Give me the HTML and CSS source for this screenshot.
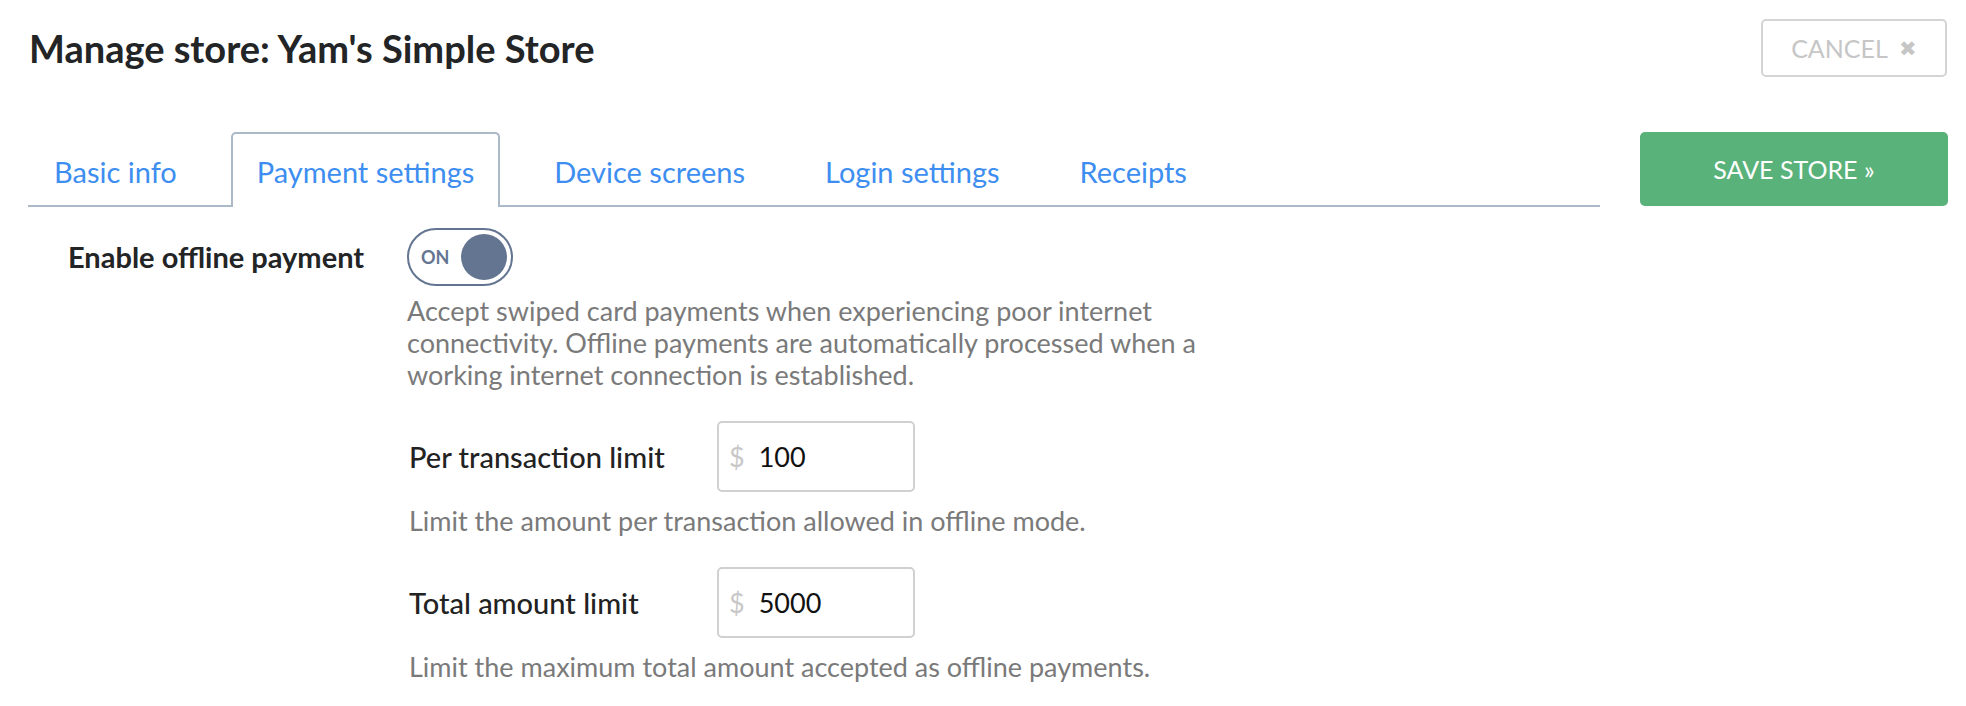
FILE: index.html
```html
<!DOCTYPE html>
<html>
<head>
<meta charset="utf-8">
<link rel="stylesheet" href="styles.css">
</head>
<body>
<header class="header">
  <h1 class="title">Manage store: Yam's Simple Store</h1>
  <button class="btn-cancel">CANCEL <span class="x">&#10006;</span></button>
</header>
<div class="main">
  <div class="content">
    <nav class="tabs">
      <a class="tab">Basic info</a>
      <a class="tab active">Payment settings</a>
      <a class="tab">Device screens</a>
      <a class="tab">Login settings</a>
      <a class="tab">Receipts</a>
    </nav>
    <div class="form">
      <div class="field-label">Enable offline payment</div>
      <div class="field-body">
        <div class="toggle"><span class="toggle-text">ON</span><span class="knob"></span></div>
        <p class="help help-main">Accept swiped card payments when experiencing poor internet connectivity. Offline payments are automatically processed when a working internet connection is established.</p>
        <div class="sub">
          <div class="sub-row">
            <label class="sub-label">Per transaction limit</label>
            <div class="money"><span class="cur">$</span><span class="val">100</span></div>
          </div>
          <p class="help">Limit the amount per transaction allowed in offline mode.</p>
          <div class="sub-row">
            <label class="sub-label">Total amount limit</label>
            <div class="money"><span class="cur">$</span><span class="val">5000</span></div>
          </div>
          <p class="help">Limit the maximum total amount accepted as offline payments.</p>
        </div>
      </div>
    </div>
  </div>
  <aside class="side">
    <button class="btn-save">SAVE STORE &raquo;</button>
  </aside>
</div>
</body>
</html>
```
FILE: styles.css
```css
* { box-sizing: border-box; }
body {
  margin: 0;
  font-family: Lato, "Open Sans", sans-serif;
  color: #222426;
  background: #fff;
}
.header {
  display: flex;
  justify-content: space-between;
  align-items: flex-start;
  padding: 19px 19px 0 29px;
}
.title {
  margin: 9px 0 0;
  font-size: 38px;
  font-weight: 700;
  line-height: 40px;
  color: #222426;
}
.btn-cancel {
  width: 186px;
  height: 58px;
  border: 2px solid #d4d4d4;
  border-radius: 5px;
  background: #fff;
  color: #c6c6c6;
  font-family: Lato, sans-serif;
  font-size: 25px;
  padding: 0;
  display: flex;
  align-items: center;
  justify-content: center;
  gap: 11px;
}
.btn-cancel .x { font-size: 21px; color: #c6c6c6; }
.main {
  display: flex;
  padding: 55px 18px 0 28px;
  gap: 40px;
}
.content { width: 1572px; }
.side { width: 308px; }
.btn-save {
  width: 308px;
  height: 74px;
  border: 0;
  border-radius: 5px;
  background: #59b27a;
  color: #fff;
  font-family: Lato, sans-serif;
  font-size: 25px;
}
.tabs {
  display: flex;
  gap: 28px;
  border-bottom: 2px solid #abb9c8;
  height: 75px;
}
.tab {
  display: flex;
  align-items: center;
  padding: 2px 24px 0;
  border: 2px solid transparent;
  border-bottom: 0;
  border-radius: 5px 5px 0 0;
  color: #3d8ef0;
  font-size: 29px;
  margin-bottom: -2px;
  height: 75px;
}
.tab.active {
  border-color: #abb9c8;
  background: #fff;
}
.form {
  display: grid;
  grid-template-columns: 339px 1fr;
  padding: 21px 0 0 40px;
}
.field-label {
  font-size: 29px;
  font-weight: 700;
  line-height: 58px;
}
.toggle {
  width: 106px;
  height: 58px;
  border: 2px solid #647591;
  border-radius: 29px;
  display: flex;
  align-items: center;
  justify-content: space-between;
  padding: 0 4px 0 12px;
}
.toggle-text {
  color: #647591;
  font-weight: 700;
  font-size: 18px;
}
.knob {
  width: 46px;
  height: 46px;
  border-radius: 50%;
  background: #647591;
}
.help {
  margin: 0;
  color: #7a7a7a;
  font-size: 27px;
  line-height: 32px;
}
.help-main {
  width: 800px;
  margin-top: 9px;
}
.sub { padding-top: 30px; padding-left: 2px; }
.sub-row {
  display: grid;
  grid-template-columns: 308px 198px;
  align-items: center;
}
.sub-label { font-size: 29px; font-weight: 500; color: #222; }
.money {
  height: 71px;
  border: 2px solid #d0d0d0;
  border-radius: 5px;
  display: flex;
  align-items: center;
  padding-left: 10px;
  gap: 14px;
  font-size: 27px;
}
.cur { color: #c8c8c8; }
.val { color: #111; }
.sub .help { margin: 13px 0 30px; }
```
